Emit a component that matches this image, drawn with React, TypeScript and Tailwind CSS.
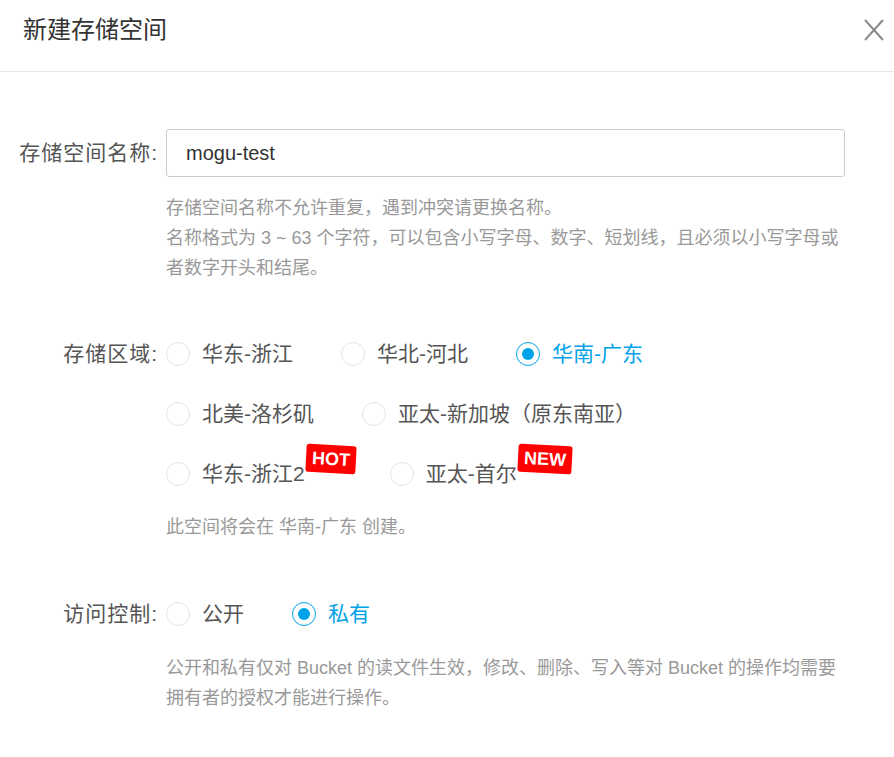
const BLUE = 'text-[#00a2e8]';

interface RadioProps {
  label: string;
  checked?: boolean;
  badge?: 'HOT' | 'NEW';
}

const Radio = ({ label, checked, badge }: RadioProps) => {
  return (
    <label className={`relative flex items-center gap-[12px] cursor-pointer ${badge ? 'pr-[37px]' : ''}`}>
      <span
        className={`flex items-center justify-center w-[24px] h-[24px] rounded-full bg-white ${
          checked ? 'border-[1.5px] border-[#00a2e8]' : 'border border-[#e3e3e3]'
        }`}
      >
        {checked && <span className="block w-[12px] h-[12px] rounded-full bg-[#00a2e8]" />}
      </span>
      <span className={`relative text-[21px] leading-[30px] ${checked ? BLUE : 'text-[#555]'}`}>
        {label}
        {badge && (
          <span className="absolute left-[calc(100%+1px)] top-[-14px] flex items-center h-[28px] px-[6px] rounded-[3px] bg-[#ff0000] text-white text-[18px] font-semibold leading-none rotate-[3deg] whitespace-nowrap">
            {badge}
          </span>
        )}
      </span>
    </label>
  );
};

const Label = ({ children }: { children: string }) => (
  <div className="w-[166px] shrink-0 pr-[8px] text-right text-[21px] leading-[30px] tracking-[1px] text-[#555]">
    {children}
  </div>
);

export default function App() {
  return (
    <div
      className="w-[894px] h-[757px] bg-white overflow-hidden"
      style={{ fontFamily: '"Liberation Sans", "Noto Sans CJK SC", sans-serif' }}
    >
      <div className="flex items-center justify-between h-[72px] pl-[23px] pr-[10px] border-b border-[#e8e8e8]">
        <h1 className="text-[24px] font-normal text-[#333] -mt-[12px]">新建存储空间</h1>
        <button className="text-[#8a8a8a] -mt-[12px]">
          <svg width="20" height="22" viewBox="0 0 20 22" fill="none" stroke="currentColor" strokeWidth="2">
            <path d="M1 1 L19 21 M19 1 L1 21" />
          </svg>
        </button>
      </div>

      <div className="pt-[57px]">
        <div className="flex items-center">
          <Label>存储空间名称:</Label>
          <div className="w-[679px] h-[48px] flex items-center px-[19px] border border-[#cccccc] rounded-[3px] text-[20px] text-[#333]">
            mogu-test
          </div>
        </div>
        <p className="ml-[166px] mt-[16px] text-[18px] leading-[30px] text-[#999] whitespace-nowrap">
          存储空间名称不允许重复，遇到冲突请更换名称。
          <br />
          名称格式为 3 ~ 63 个字符，可以包含小写字母、数字、短划线，且必须以小写字母或
          <br />
          者数字开头和结尾。
        </p>

        <div className="flex mt-[41px]">
          <div className="h-[60px] flex items-center">
            <Label>存储区域:</Label>
          </div>
          <div className="flex flex-col">
            <div className="h-[60px] flex items-center gap-[48px]">
              <Radio label="华东-浙江" />
              <Radio label="华北-河北" />
              <Radio label="华南-广东" checked />
            </div>
            <div className="h-[60px] flex items-center gap-[48px]">
              <Radio label="北美-洛杉矶" />
              <Radio label="亚太-新加坡（原东南亚）" />
            </div>
            <div className="h-[60px] flex items-center gap-[48px]">
              <Radio label="华东-浙江2" badge="HOT" />
              <Radio label="亚太-首尔" badge="NEW" />
            </div>
          </div>
        </div>
        <p className="ml-[166px] mt-[8px] text-[18px] leading-[30px] text-[#999]">此空间将会在 华南-广东 创建。</p>

        <div className="flex items-center h-[60px] mt-[42px]">
          <Label>访问控制:</Label>
          <div className="flex items-center gap-[48px]">
            <Radio label="公开" />
            <Radio label="私有" checked />
          </div>
        </div>
        <p className="ml-[166px] mt-[9px] text-[18px] leading-[30px] text-[#999] whitespace-nowrap">
          公开和私有仅对 Bucket 的读文件生效，修改、删除、写入等对 Bucket 的操作均需要
          <br />
          拥有者的授权才能进行操作。
        </p>
      </div>
    </div>
  );
}
